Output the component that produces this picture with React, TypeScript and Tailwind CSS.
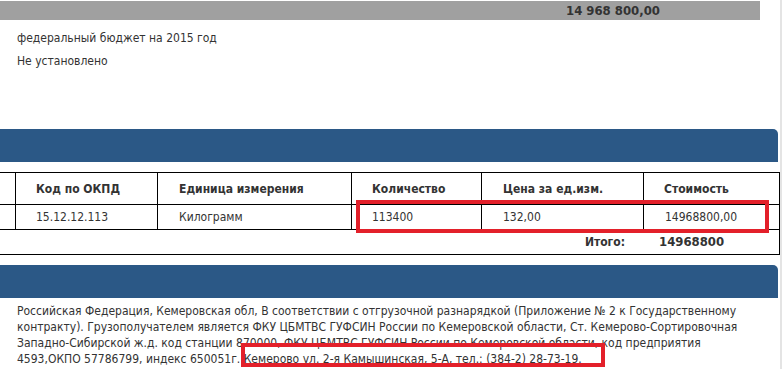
import React from "react";

const font = { fontFamily: '"DejaVu Sans Condensed", "DejaVu Sans", sans-serif' };

export default function App() {
  return (
    <div className="relative flex w-[782px] h-[369px] overflow-hidden bg-white text-[12px] text-[#333]" style={font}>
      <div className="w-[780px] flex flex-col">
        <div className="mt-[1px] h-[19px] w-[760px] bg-[#a0a0a0] flex items-center">
          <span className="ml-[566px] font-bold text-[13px] text-[#333] leading-none">14 968 800,00</span>
        </div>
        <div className="pl-[17px] pt-[7px] leading-[23px]">
          <div>федеральный бюджет на 2015 год</div>
          <div>Не установлено</div>
        </div>
        <div className="mt-[56px] h-[33px] w-[778px] bg-[#2b5886] rounded-tr-[5px]" />
        <div className="mt-[10px] w-[780px]">
          <div className="flex h-[33px] border-t border-b border-r border-black font-bold items-center">
            <div className="w-[16px] h-full border-r border-black" />
            <div className="w-[142px] h-full border-r border-black pl-[20px] flex items-center">Код по ОКПД</div>
            <div className="w-[194px] h-full border-r border-black pl-[21px] flex items-center">Единица измерения</div>
            <div className="w-[130px] h-full border-r border-black pl-[20px] flex items-center">Количество</div>
            <div className="w-[162px] h-full border-r border-black pl-[21px] flex items-center">Цена за ед.изм.</div>
            <div className="flex-1 h-full pl-[20px] flex items-center">Стоимость</div>
          </div>
          <div className="flex h-[25px] border-b border-r border-black items-center">
            <div className="w-[16px] h-full border-r border-black" />
            <div className="w-[142px] h-full border-r border-black pl-[20px] flex items-center">15.12.12.113</div>
            <div className="w-[194px] h-full border-r border-black pl-[21px] flex items-center">Килограмм</div>
            <div className="w-[130px] h-full border-r border-black pl-[20px] flex items-center">113400</div>
            <div className="w-[162px] h-full border-r border-black pl-[21px] flex items-center">132,00</div>
            <div className="flex-1 h-full pl-[21px] flex items-center">14968800,00</div>
          </div>
          <div className="flex h-[25px] border-b border-r border-black items-center font-bold">
            <div className="w-[625px] text-right text-[#333]">Итого:</div>
            <div className="pl-[34px] text-[13px]">14968800</div>
          </div>
        </div>
        <div className="mt-[10px] h-[33px] w-[778px] bg-[#2b5886] rounded-tr-[5px]" />
        <div className="pl-[17px] pt-[5px] leading-[16px]">
          Российская Федерация, Кемеровская обл, В соответствии с отгрузочной разнарядкой (Приложение № 2 к Государственному
          <br />
          контракту). Грузополучателем является ФКУ ЦБМТВС ГУФСИН России по Кемеровской области, Ст. Кемерово-Сортировочная
          <br />
          Западно-Сибирской ж.д. код станции 870000, ФКУ ЦБМТВС ГУФСИН России по Кемеровской области, код предприятия
          <br />
          4593,ОКПО 57786799, индекс 650051г. Кемерово ул. 2-я Камышинская, 5-А, тел.: (384-2) 28-73-19.
        </div>
      </div>
      <div className="w-[2px] bg-[#e4e4e4]" />
      <div className="absolute left-[356px] top-[200px] w-[413px] h-[33px] border-[4px] border-[#e3202a]" />
      <div className="absolute left-[241px] top-[343px] w-[364px] h-[24px] border-[4px] border-[#e3202a]" />
    </div>
  );
}
